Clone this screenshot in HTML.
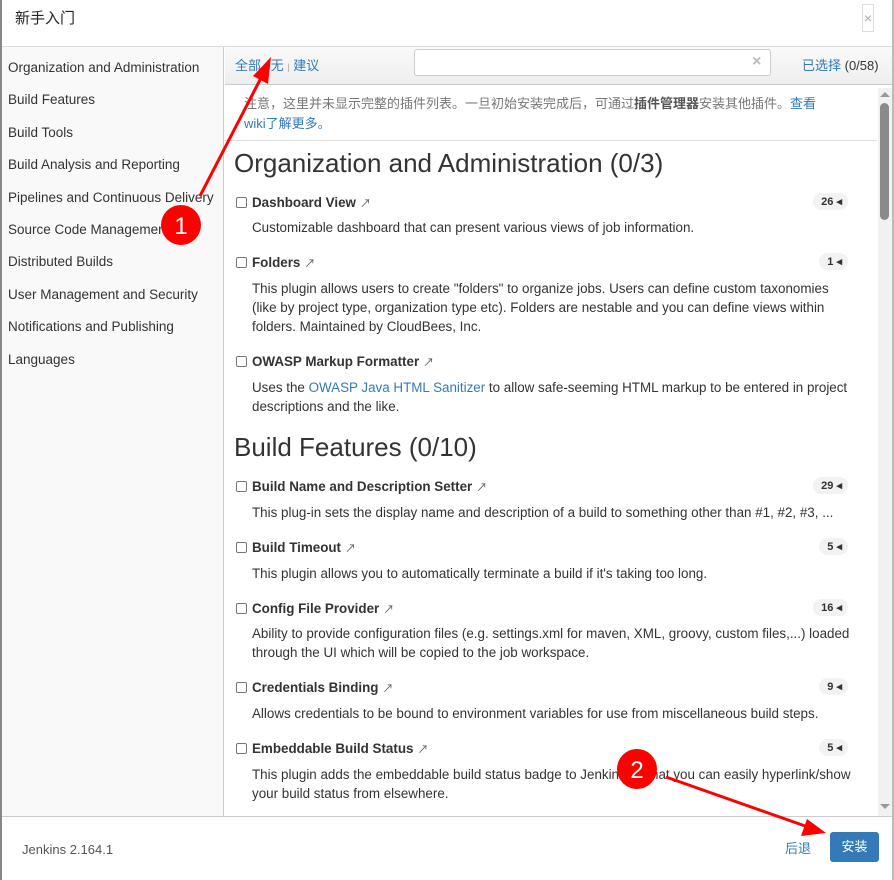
<!DOCTYPE html>
<html><head><meta charset="utf-8"><style>
*{margin:0;padding:0;box-sizing:border-box}
body{width:894px;height:880px;overflow:hidden;background:#fff;font-family:"Liberation Sans","Noto Sans CJK SC",sans-serif;color:#333;position:relative;font-size:13px}
.a{position:absolute;white-space:nowrap}
.lnk{color:#337ab7}
.side div{position:absolute;left:6px;font-size:13.5px;color:#333;white-space:nowrap}
.t{position:absolute;left:236px;font-weight:bold;font-size:13.4px;color:#333;white-space:nowrap}
.t i{display:inline-block;width:11px;height:11px;border:1px solid #767676;border-radius:2px;vertical-align:-1px;margin-right:5px;background:#fff}
.t s{text-decoration:none;font-weight:normal;font-size:11px;color:#555;margin-left:4px}
.d{position:absolute;left:252px;font-size:13.4px;line-height:19px;color:#333;white-space:nowrap}
.b{position:absolute;right:46px;height:17px;border-radius:9px;background:#f2f2f2;font-size:11px;font-weight:bold;color:#333;padding:2px 6px 0 8px;white-space:nowrap;line-height:14px}
.h{position:absolute;left:234px;font-size:26px;color:#333;white-space:nowrap}
</style></head><body>
<div class="a" style="left:0;top:0;width:2px;height:880px;background:#888"></div>
<div class="a" style="left:892px;top:0;width:2px;height:880px;background:#bbb"></div>
<div class="a" style="left:15px;top:7px;font-size:15px;color:#222">新手入门</div>
<div class="a" style="left:862px;top:4px;width:12px;height:28px;border:1px solid #ddd;color:#aaa;font-size:14px;text-align:center;line-height:26px">×</div>
<div class="a" style="left:2px;top:46px;width:890px;height:1px;background:#ddd"></div>
<div class="a side" style="left:2px;top:47px;width:222px;height:769px;background:#f9f9f9;border-right:1px solid #ccc">
<div style="top:13px">Organization and Administration</div>
<div style="top:45px">Build Features</div>
<div style="top:78px">Build Tools</div>
<div style="top:110px">Build Analysis and Reporting</div>
<div style="top:143px">Pipelines and Continuous Delivery</div>
<div style="top:175px">Source Code Management</div>
<div style="top:207px">Distributed Builds</div>
<div style="top:240px">User Management and Security</div>
<div style="top:272px">Notifications and Publishing</div>
<div style="top:305px">Languages</div>
</div>
<div class="a" style="left:225px;top:47px;width:667px;height:38px;background:linear-gradient(#fafafa,#eee);border-bottom:1px solid #ccc"></div>
<div class="a" style="left:235px;top:55px;font-size:13px"><span class="lnk">全部</span> <span style="color:#aaa;font-size:9px">|</span> <span class="lnk">无</span> <span style="color:#aaa;font-size:9px">|</span> <span class="lnk">建议</span></div>
<div class="a" style="left:414px;top:49px;width:357px;height:27px;border:1px solid #ccc;border-radius:3px;background:#fff"></div>
<div class="a" style="left:752px;top:53px;color:#bbb;font-size:16px;font-weight:bold">×</div>
<div class="a" style="left:802px;top:55px;font-size:13px"><span class="lnk">已选择</span> (0/58)</div>
<div class="a" style="left:244px;top:94px;font-size:13px;color:#777;line-height:20px">注意，这里并未显示完整的插件列表。一旦初始安装完成后，可通过<b style="color:#555">插件管理器</b>安装其他插件。<span class="lnk">查看</span><br><span class="lnk">wiki</span><span class="lnk">了解更多。</span></div>
<div class="a" style="left:225px;top:140px;width:652px;height:1px;background:#ddd"></div>
<div class="a" style="left:878px;top:88px;width:14px;height:728px;background:#f1f1f1"></div>
<div class="a" style="left:880px;top:103px;width:9px;height:117px;background:#8a8a8a;border-radius:5px"></div>
<div class="a" style="left:880px;top:92px;width:0;height:0;border-left:5px solid transparent;border-right:5px solid transparent;border-bottom:5px solid #999"></div>
<div class="a" style="left:880px;top:804px;width:0;height:0;border-left:5px solid transparent;border-right:5px solid transparent;border-top:5px solid #999"></div>
<div class="h" style="top:148px">Organization and Administration (0/3)</div>
<div class="t" style="top:195px"><i></i>Dashboard View<s>↗</s></div><div class="b" style="top:193px">26 ◂</div>
<div class="d" style="top:218px">Customizable dashboard that can present various views of job information.</div>
<div class="t" style="top:255px"><i></i>Folders<s>↗</s></div><div class="b" style="top:253px">1 ◂</div>
<div class="d" style="top:279px">This plugin allows users to create "folders" to organize jobs. Users can define custom taxonomies<br>(like by project type, organization type etc). Folders are nestable and you can define views within<br>folders. Maintained by CloudBees, Inc.</div>
<div class="t" style="top:354px"><i></i>OWASP Markup Formatter<s>↗</s></div>
<div class="d" style="top:378px">Uses the <span class="lnk">OWASP Java HTML Sanitizer</span> to allow safe-seeming HTML markup to be entered in project<br>descriptions and the like.</div>
<div class="h" style="top:432px">Build Features (0/10)</div>
<div class="t" style="top:479px"><i></i>Build Name and Description Setter<s>↗</s></div><div class="b" style="top:477px">29 ◂</div>
<div class="d" style="top:503px">This plug-in sets the display name and description of a build to something other than #1, #2, #3, ...</div>
<div class="t" style="top:540px"><i></i>Build Timeout<s>↗</s></div><div class="b" style="top:538px">5 ◂</div>
<div class="d" style="top:564px">This plugin allows you to automatically terminate a build if it's taking too long.</div>
<div class="t" style="top:601px"><i></i>Config File Provider<s>↗</s></div><div class="b" style="top:599px">16 ◂</div>
<div class="d" style="top:624px">Ability to provide configuration files (e.g. settings.xml for maven, XML, groovy, custom files,...) loaded<br>through the UI which will be copied to the job workspace.</div>
<div class="t" style="top:680px"><i></i>Credentials Binding<s>↗</s></div><div class="b" style="top:678px">9 ◂</div>
<div class="d" style="top:704px">Allows credentials to be bound to environment variables for use from miscellaneous build steps.</div>
<div class="t" style="top:741px"><i></i>Embeddable Build Status<s>↗</s></div><div class="b" style="top:739px">5 ◂</div>
<div class="d" style="top:765px">This plugin adds the embeddable build status badge to Jenkins so that you can easily hyperlink/show<br>your build status from elsewhere.</div>
<div class="a" style="left:2px;top:816px;width:890px;height:1px;background:#ccc"></div>
<div class="a" style="left:22px;top:842px;font-size:13px;color:#555">Jenkins 2.164.1</div>
<div class="a lnk" style="left:785px;top:838px;font-size:13px">后退</div>
<div class="a" style="left:830px;top:832px;width:49px;height:30px;background:#337ab7;border-radius:3px;color:#fff;font-size:13px;text-align:center;line-height:30px">安装</div>
<svg class="a" style="left:0;top:0" width="894" height="880">
<line x1="200" y1="196" x2="262" y2="76" stroke="#f00" stroke-width="3"/>
<path d="M271,57 L268,84 L253,76 Z" fill="#f00"/>
<line x1="666" y1="777" x2="808" y2="827" stroke="#f00" stroke-width="3"/>
<path d="M826,833 L801,836 L807,819 Z" fill="#f00"/>
<circle cx="181" cy="225" r="20" fill="#f00"/>
<text x="181" y="234" font-size="24" fill="#fff" text-anchor="middle" font-family="Liberation Sans">1</text>
<circle cx="637" cy="769" r="20" fill="#f00"/>
<text x="637" y="778" font-size="24" fill="#fff" text-anchor="middle" font-family="Liberation Sans">2</text>
</svg>
</body></html>
